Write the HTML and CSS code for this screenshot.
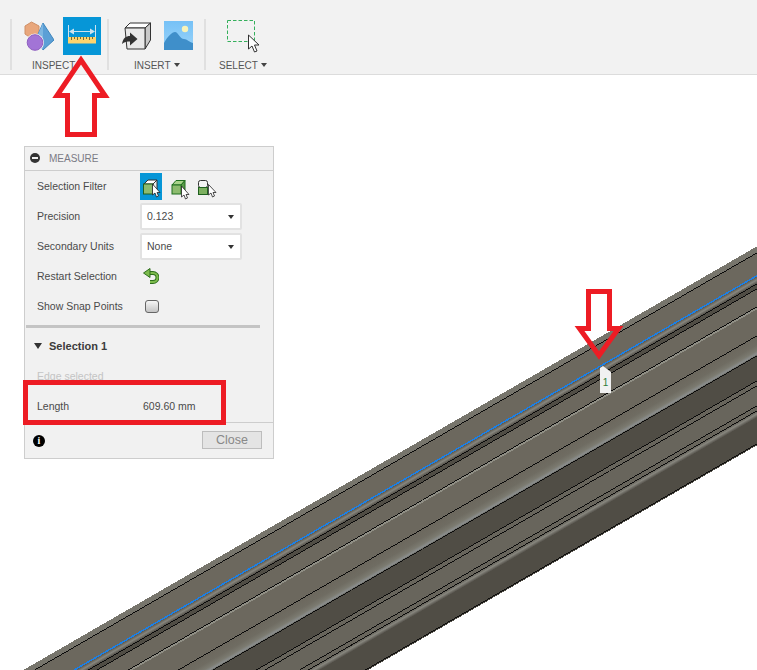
FILE: index.html
```html
<!DOCTYPE html>
<html lang="en">
<head>
<meta charset="utf-8">
<title>Measure</title>
<link rel="stylesheet" href="styles.css">
</head>
<body>
<div class="app">
  <header class="toolbar">
    <section class="group group-inspect">
      <div class="tools">
        <svg class="icon" width="30" height="31" viewBox="0 0 30 31">
          <polygon points="7.5,1 15,5 15,13 7.5,17.5 1,13 1,5" fill="#e9a77c" stroke="#cf9067"/>
          <polygon points="19,2 30,19 19,29 12,18" fill="#5b9fd6" stroke="#3f86bd"/>
          <polygon points="19,2 19,29 12,18" fill="#7db6e2"/>
          <circle cx="11" cy="21.5" r="9" fill="#f2f2f2"/>
          <circle cx="11" cy="21.5" r="7.8" fill="#a274d6" stroke="#8f5fc0"/>
        </svg>
        <div class="tile">
          <svg width="38" height="38" viewBox="0 0 38 38">
            <rect x="5" y="20" width="28" height="6.5" fill="#fdd46e"/>
            <path d="M8.5 20v3M11.5 20v2M14.5 20v3M17.5 20v2M20.5 20v3M23.5 20v2M26.5 20v3M29.5 20v2" stroke="#7a6a3a"/>
            <path d="M5.5 8v12M32.5 8v12M7 14.5h24" stroke="#cfe3ee" fill="none"/>
            <path d="M6 14.5l5-3v6zM32 14.5l-5-3v6z" fill="#cfe3ee"/>
          </svg>
        </div>
      </div>
      <div class="label">INSPECT</div>
    </section>
    <section class="group group-insert">
      <div class="tools">
        <svg class="icon" width="30" height="28" viewBox="0 0 30 28">
          <polygon points="9,1 29.5,1 24,6 4,6" fill="#fff" stroke="#333"/>
          <polygon points="24,6 29.5,1 29.5,18 24,27" fill="#c9c9c9" stroke="#333"/>
          <polygon points="4,6 24,6 24,27 6,27" fill="#e9e9e9" stroke="#333"/>
          <path d="M1 22C2 16 5 14 9 14V10.500L16.500 17 9 23.500V19.500C6 19.500 3 20 1 22Z" fill="#333"/>
        </svg>
        <svg class="icon" width="29" height="29" viewBox="0 0 29 29">
          <defs><linearGradient id="sky" x1="0" y1="0" x2="0" y2="1"><stop offset="0" stop-color="#76c1f6"/><stop offset="1" stop-color="#9ad4fa"/></linearGradient></defs>
          <rect width="29" height="29" fill="url(#sky)"/>
          <circle cx="21" cy="8" r="3.200" fill="#f8f3b8"/>
          <path d="M0 22C4 15 8 11 11 11C14 11 16 18 20 18C23 18 25 21 29 22V29H0Z" fill="#3f8fca"/>
        </svg>
      </div>
      <div class="label">INSERT<span class="caret"></span></div>
    </section>
    <section class="group group-select">
      <div class="tools">
        <svg class="icon" width="36" height="36" viewBox="0 0 36 36">
          <rect x="2.500" y="2.500" width="27" height="21" fill="none" stroke="#35b05c" stroke-dasharray="3.500 2"/>
          <path d="M23.500 17V31L27 28L29.500 34L32 33L29.500 27L34 27Z" fill="#fff" stroke="#333"/>
        </svg>
      </div>
      <div class="label">SELECT<span class="caret"></span></div>
    </section>
  </header>

  <main class="viewport">
    <svg class="scene" width="757" height="595" viewBox="0 75 757 595">
      <defs>
        <linearGradient id="ridge" x1="0" y1="0" x2="0" y2="1">
          <stop offset="0" stop-color="#6c685e"/>
          <stop offset=".45" stop-color="#6f6c62"/>
          <stop offset=".75" stop-color="#7b7a70"/>
          <stop offset=".93" stop-color="#8b8e8e"/>
          <stop offset="1" stop-color="#66665f"/>
        </linearGradient>
        <linearGradient id="fillet" x1="0" y1="0" x2="0" y2="1">
          <stop offset="0" stop-color="#5a574e"/>
          <stop offset=".5" stop-color="#87867e"/>
          <stop offset="1" stop-color="#54514a"/>
        </linearGradient>
      </defs>
      <g class="body" transform="matrix(1 -0.5775 0 1 0 683.500)">
        <rect class="face-edge" y="0" width="757" height="7"/>
        <rect class="face-top" y="6" width="757" height="25"/>
        <rect y="30" width="757" height="7" fill="url(#fillet)"/>
        <rect class="face-dark" y="37" width="757" height="5"/>
        <rect class="face-top" y="42" width="757" height="18"/>
        <rect class="glint" y="61" width="757" height="2"/>
        <rect class="face-top" y="63" width="757" height="27"/>
        <rect y="90" width="757" height="19" fill="url(#ridge)"/>
        <rect class="face-dark" y="109" width="757" height="25"/>
        <rect class="face-mid" y="134" width="757" height="30"/>
        <rect y="164" width="757" height="7" fill="url(#fillet)"/>
        <rect class="face-dark" y="171" width="757" height="28"/>
        <g class="edges">
          <rect y="6" width="757" height="1"/>
          <rect y="37" width="757" height="1"/>
          <rect y="42" width="757" height="1"/>
          <rect y="60" width="757" height="1"/>
          <rect y="89" width="757" height="1"/>
          <rect y="109" width="757" height="1"/>
          <rect y="134" width="757" height="1"/>
          <rect y="139" width="757" height="1"/>
          <rect y="159" width="757" height="1"/>
          <rect y="164" width="757" height="1"/>
          <rect y="197" width="757" height="1"/>
        </g>
        <rect class="selected-edge" y="28.500" width="757" height="1.700"/>
      </g>
      <polygon class="marker" points="600,368 603,366 611,372 611,393 600,393"/>
      <text class="marker-text" x="605.500" y="386">1</text>
    </svg>

    <aside class="panel">
      <div class="panel-head"><span class="minus"></span>MEASURE</div>
      <div class="row">
        <span class="row-label">Selection Filter</span>
        <div class="filters">
          <svg class="filter filter-on" width="22" height="27" viewBox="0 0 22 27">
            <polygon points="4,11 8,7 17,7 13,11" fill="#fff" stroke="#333"/>
            <polygon points="13,11 17,7 17,17 13,21" fill="#eee" stroke="#333"/>
            <rect x="3.500" y="11" width="9.500" height="10" fill="#8dbb6e" stroke="#1f5f1f"/>
            <path d="M12.500 11V22L15 20L16.500 24L18.500 23L17 19.500H20Z" fill="#fff" stroke="#222" stroke-width=".8"/>
          </svg>
          <svg class="filter" width="22" height="27" viewBox="0 0 22 27">
            <polygon points="4,12 8,7.500 17,7.500 13,12" fill="#a9d38a" stroke="#1f6f1f"/>
            <polygon points="13,12 17,7.500 17,17 13,21" fill="#5a9a48" stroke="#1f6f1f"/>
            <rect x="4" y="12" width="9" height="9" fill="#8dbb6e" stroke="#1f6f1f"/>
            <path d="M13.500 13V24L16 22L17.500 26L19.500 25L18 21.500H21Z" fill="#fff" stroke="#222" stroke-width=".8"/>
          </svg>
          <svg class="filter" width="22" height="27" viewBox="0 0 22 27">
            <rect x="2.500" y="7.500" width="9" height="7" rx="2" fill="#f4f4f4" stroke="#333"/>
            <rect x="2.500" y="14.500" width="9" height="7" fill="#7db060" stroke="#1f5f1f"/>
            <path d="M12.500 11.500V22L15 20L16.500 24L18.500 23L17 19.500H20Z" fill="#fff" stroke="#222" stroke-width=".8"/>
          </svg>
        </div>
      </div>
      <div class="row">
        <span class="row-label">Precision</span>
        <div class="select">0.123<span class="caret"></span></div>
      </div>
      <div class="row">
        <span class="row-label">Secondary Units</span>
        <div class="select">None<span class="caret"></span></div>
      </div>
      <div class="row">
        <span class="row-label">Restart Selection</span>
        <svg class="restart" width="16" height="16" viewBox="0 0 16 16">
          <path d="M6 5H10A4.500 4.500 0 0 1 10 14H7" fill="none" stroke="#2e6f1e" stroke-width="4"/>
          <path d="M6 5H10A4.500 4.500 0 0 1 10 14H7" fill="none" stroke="#7dbb4c" stroke-width="2"/>
          <path d="M.500 5L7 .500V9.500Z" fill="#7dbb4c" stroke="#2e6f1e"/>
        </svg>
      </div>
      <div class="row">
        <span class="row-label">Show Snap Points</span>
        <span class="checkbox"></span>
      </div>
      <div class="divider"></div>
      <div class="section"><span class="disclosure"></span>Selection 1</div>
      <div class="row row-muted"><span class="row-label">Edge selected</span></div>
      <div class="row">
        <span class="row-label">Length</span>
        <span class="row-value">609.60 mm</span>
      </div>
      <div class="panel-foot">
        <span class="info">i</span>
        <button class="close" type="button">Close</button>
      </div>
    </aside>
  </main>

  <svg class="annotations" width="757" height="670" viewBox="0 0 757 670">
    <polygon points="81,60 57,95.500 67.500,95.500 67.500,134.500 94.500,134.500 94.500,95.500 105,95.500"/>
    <polygon points="588.500,291.500 609.500,291.500 609.500,328.500 618.500,328.500 599,355.500 579.500,328.500 588.500,328.500"/>
    <rect x="25.500" y="382.500" width="198" height="40"/>
  </svg>
</div>
</body>
</html>
```
FILE: styles.css
```css
* { box-sizing: border-box; }
html, body { margin: 0; padding: 0; background: #fff; }
body { font-family: "Liberation Sans", Arial, sans-serif; color: #4a4a4a; }

.app {
  position: relative;
  width: 757px;
  height: 670px;
  overflow: hidden;
  display: flex;
  flex-direction: column;
}

/* Toolbar */
.toolbar {
  height: 75px;
  flex: none;
  display: flex;
  padding: 19px 0 0 10px;
  background: #f2f2f2;
  border-bottom: 1px solid #dcdcdc;
}
.group {
  width: 97px;
  height: 51px;
  border-left: 2px solid #e0e0e0;
}
.tools {
  display: flex;
  height: 38px;
  margin-top: -2px;
  align-items: flex-start;
}
.group-inspect .tools { padding: 0 0 0 12px; gap: 9px; }
.group-inspect .icon { margin-top: 4px; }
.group-insert .tools { padding: 0 0 0 12px; gap: 13px; }
.group-insert .icon { margin-top: 5px; }
.group-insert .icon + .icon { margin-top: 4px; }
.group-select .tools { padding: 0 0 0 19px; }
.group-select .icon { margin-top: 1px; }
.tile { width: 38px; height: 38px; background: #0696d7; }
.tile svg { display: block; }
.label {
  display: flex;
  align-items: center;
  height: 12px;
  margin-top: 4px;
  font-size: 10px;
  color: #555;
  white-space: nowrap;
}
.group-inspect .label { padding-left: 20px; }
.group-insert .label { padding-left: 25px; }
.group-select .label { padding-left: 13px; }
.label .caret {
  margin-left: 3px;
  border-left: 3px solid transparent;
  border-right: 3px solid transparent;
  border-top: 4px solid #444;
}

/* Viewport */
.viewport { position: relative; flex: 1; }
.scene { position: absolute; left: 0; top: 0; display: block; }
.body { shape-rendering: crispEdges; }
.face-edge { fill: #77756c; }
.face-top { fill: #6c685e; }
.face-mid { fill: #68655c; }
.face-dark { fill: #504d45; }
.glint { fill: #8f8e84; }
.edges rect { fill: #0b0b0b; }
.selected-edge { fill: #1a80e8; }
.marker { fill: #f1f1f1; }
.marker-text { font-family: "Liberation Sans", Arial, sans-serif; font-size: 10px; fill: #2f7d3a; text-anchor: middle; }

/* Panel */
.panel {
  position: absolute;
  left: 24px;
  top: 71px;
  width: 250px;
  height: 313px;
  background: #f1f1f1;
  border: 1px solid #cdcdcd;
  font-size: 10.5px;
}
.panel-head {
  display: flex;
  align-items: center;
  height: 24px;
  padding: 0 0 1px 24px;
  position: relative;
  font-size: 10px;
  color: #7b7b85;
  border-bottom: 1px solid #cdcdcd;
}
.minus {
  position: absolute;
  left: 5px;
  top: 6px;
  width: 10px;
  height: 10px;
  border-radius: 50%;
  background: #333;
}
.minus::after {
  content: "";
  position: absolute;
  left: 2px;
  top: 4px;
  width: 6px;
  height: 2px;
  background: #f1f1f1;
}
.row {
  display: flex;
  align-items: center;
  height: 30px;
  padding-left: 12px;
}
.row-label { width: 103px; flex: none; }
.row-muted { color: #c4c4c4; }
.row-value { padding-left: 3px; }
.filters { display: flex; align-items: center; gap: 6px; }
.filter { display: block; flex: none; }
.filter-on { background: #0696d7; }
.select {
  position: relative;
  display: flex;
  align-items: center;
  width: 102px;
  height: 27px;
  padding-left: 5px;
  background: #fff;
  border: 2px solid #e2e2e2;
  border-radius: 2px;
}
.select .caret {
  position: absolute;
  right: 6px;
  top: 10px;
  border-left: 3.5px solid transparent;
  border-right: 3.5px solid transparent;
  border-top: 4px solid #333;
}
.restart { margin-left: 3px; }
.checkbox {
  width: 14px;
  height: 13px;
  margin-left: 5px;
  border: 1px solid #666;
  border-radius: 3px;
  background: linear-gradient(#f6f6f6, #c4c4c4);
}
.divider {
  width: 234px;
  height: 3px;
  margin: 4px 0 0 1px;
  background: #c4c4c4;
}
.section {
  display: flex;
  align-items: center;
  height: 33px;
  padding: 3px 0 0 9px;
  font-size: 11px;
  font-weight: bold;
  color: #3c3c3c;
}
.disclosure {
  width: 0;
  height: 0;
  margin-right: 7px;
  border-left: 4.5px solid transparent;
  border-right: 4.5px solid transparent;
  border-top: 6px solid #333;
}
.panel-foot {
  display: flex;
  align-items: center;
  justify-content: space-between;
  height: 35px;
  margin-top: 1px;
  padding: 0 11px 0 8px;
  border-top: 1px solid #cdcdcd;
}
.info {
  width: 12px;
  height: 12px;
  margin-top: 2px;
  border-radius: 50%;
  background: #000;
  color: #fff;
  font: bold 10px/12px "Liberation Serif", serif;
  text-align: center;
}
.close {
  width: 60px;
  height: 18px;
  padding: 0;
  background: #e4e4e4;
  border: 1px solid #bdbdbd;
  font: 12.5px "Liberation Sans", Arial, sans-serif;
  color: #888;
}

/* Red callouts over everything */
.annotations {
  position: absolute;
  left: 0;
  top: 0;
  pointer-events: none;
}
.annotations polygon { fill: none; stroke: #ed1c24; stroke-width: 5; stroke-linejoin: miter; }
.annotations rect { fill: none; stroke: #ed1c24; stroke-width: 5; }
```
